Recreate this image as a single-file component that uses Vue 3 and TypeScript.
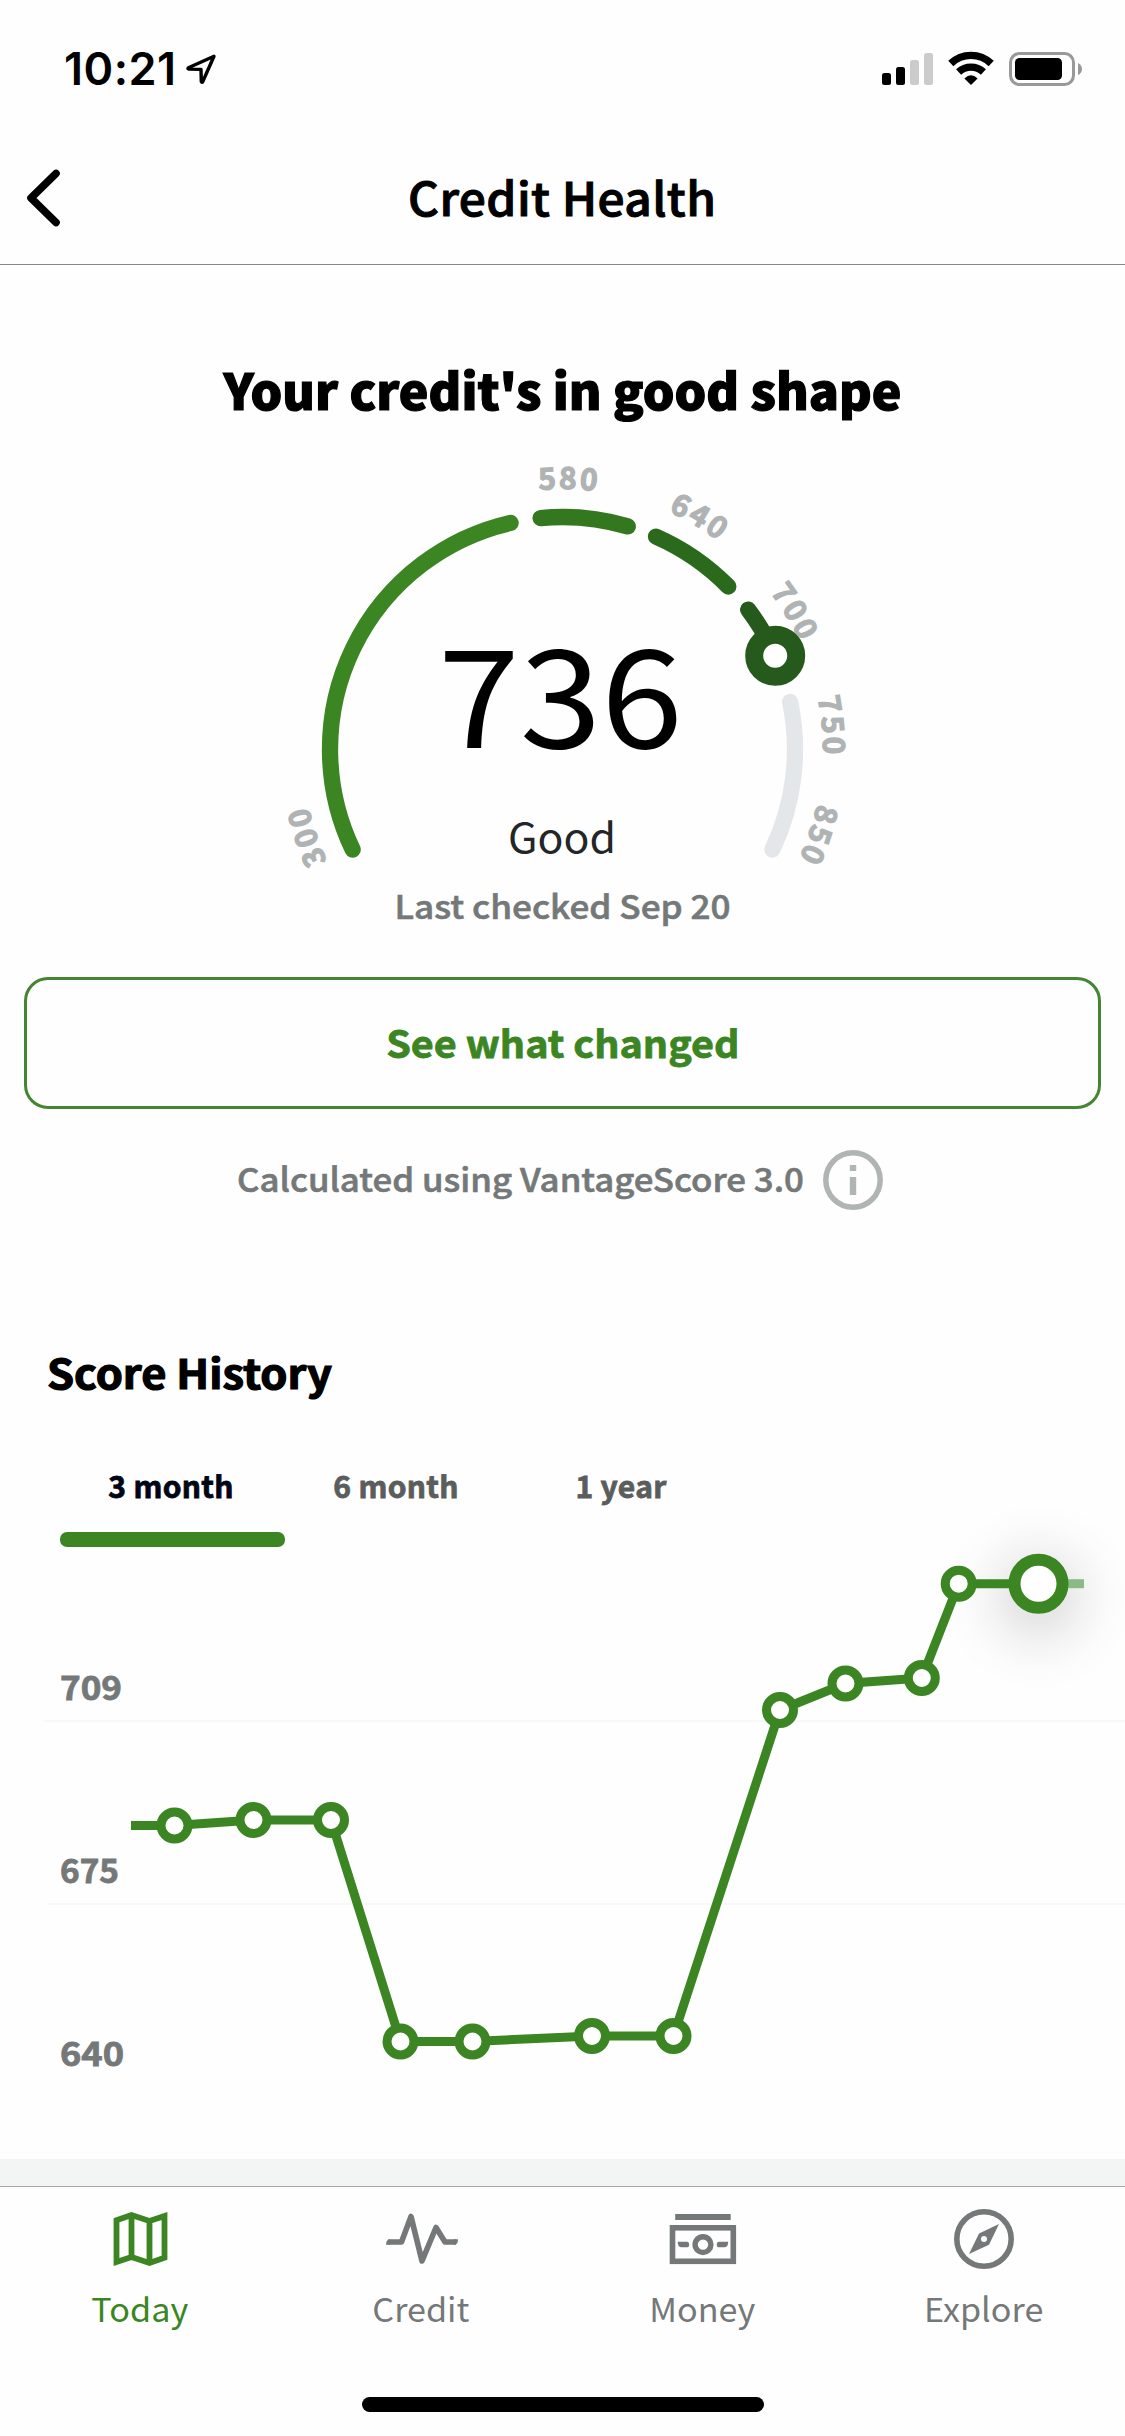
<script setup lang="ts">
interface Point { x: number; y: number }
interface Segment { from: number; to: number; color: string }
interface Label { text: string; angle: number }

const CX = 562.5
const CY = 749.5
const R = 232.5

function polar(angle: number, r: number): string {
  const a = (angle * Math.PI) / 180
  return `${(CX + r * Math.cos(a)).toFixed(2)} ${(CY + r * Math.sin(a)).toFixed(2)}`
}

function arc(from: number, to: number, r: number): string {
  return `M${polar(from, r)}A${r} ${r} 0 ${to - from > 180 ? 1 : 0} 1 ${polar(to, r)}`
}

const segments: Segment[] = [
  { from: -205.5, to: -102.9, color: '#3b8523' },
  { from: -95.4, to: -73.7, color: '#33781f' },
  { from: -66.3, to: -44.5, color: '#2b691d' },
  { from: -37, to: -23.8, color: '#255a1c' },
  { from: -11.8, to: 25.5, color: '#e4e7ea' },
]

const gaugeLabels: Label[] = [
  { text: '300', angle: -198.8 },
  { text: '580', angle: -88.6 },
  { text: '640', angle: -59.4 },
  { text: '700', angle: -30.6 },
  { text: '750', angle: -5 },
  { text: '850', angle: 18.6 },
]

const ranges = ['3 month', '6 month', '1 year']

const points: Point[] = [
  { x: 174.5, y: 1825.5 },
  { x: 253.5, y: 1820 },
  { x: 331, y: 1820 },
  { x: 400.5, y: 2041.5 },
  { x: 472.5, y: 2041.5 },
  { x: 592, y: 2036 },
  { x: 673.5, y: 2036 },
  { x: 780, y: 1710 },
  { x: 845.5, y: 1683.5 },
  { x: 921.8, y: 1678 },
  { x: 958.7, y: 1583.7 },
]
const latest: Point = { x: 1038.5, y: 1583.7 }
const line = [{ x: 131, y: 1825.5 }, ...points, latest].map((p) => `${p.x},${p.y}`).join(' ')

const axis = [
  { text: '709', y: 1700, width: 62 },
  { text: '675', y: 1883, width: 59 },
  { text: '640', y: 2066, width: 64 },
]
</script>

<template>
  <div class="screen">
    <div class="status">
      <div class="clock">
        <span>10:21</span>
        <svg width="32" height="32" viewBox="0 0 32 32">
          <path d="M29 3.2L3.400 14.800q-1.200.9.400 1.300l12.200.3.300 12.200q.6 1.300 1.400.1z" fill="none" stroke="#000" stroke-width="3.400" stroke-linejoin="round" />
        </svg>
      </div>
      <svg class="indicators" width="202" height="36" viewBox="881 51 202 36">
        <rect x="882" y="73" width="9" height="12" rx="2.500" />
        <rect x="896" y="67" width="9" height="18" rx="2.500" />
        <rect x="910" y="60" width="9" height="25" rx="2.500" fill="#cbcbcb" />
        <rect x="924" y="53" width="9" height="32" rx="2.500" fill="#cbcbcb" />
        <path d="M950.800 63.500A29.200 29.200 0 0 1 991.200 63.500" fill="none" stroke="#000" stroke-width="7.400" />
        <path d="M958.600 72A18.200 18.200 0 0 1 983.400 72" fill="none" stroke="#000" stroke-width="7.400" />
        <path d="M971 85L964.400 78.400Q971 72.200 977.600 78.400Z" />
        <rect x="1010.500" y="53.500" width="63" height="31" rx="9" fill="none" stroke="#999" stroke-width="3" />
        <rect x="1015" y="58" width="47" height="22" rx="4.500" />
        <path d="M1078 63q4 2 4 6t-4 6z" fill="#999" />
      </svg>
    </div>

    <header class="nav">
      <svg class="back" width="36" height="60" viewBox="0 0 36 60">
        <path d="M32 5.500L7 30L32 54.500" fill="none" stroke="#000" stroke-width="7.600" stroke-linecap="round" stroke-linejoin="round" />
      </svg>
      <h1>Credit Health</h1>
    </header>

    <main>
      <h2 class="headline">Your credit's in good shape</h2>

      <svg class="gauge" width="1125" height="462" viewBox="0 419 1125 462">
        <defs>
          <path v-for="l in gaugeLabels" :id="'arc' + l.text" :key="l.text" :d="arc(l.angle - 12, l.angle + 12, 260.500)" />
        </defs>
        <text v-for="l in gaugeLabels" :key="l.text" class="tick">
          <textPath :href="'#arc' + l.text" startOffset="50%">{{ l.text }}</textPath>
        </text>
        <path v-for="s in segments" :key="s.from" :d="arc(s.from, s.to, R)" :stroke="s.color" class="segment" />
        <circle cx="775.200" cy="655.700" r="21" fill="#fff" stroke="#255a1c" stroke-width="18" />
        <text class="score" x="438" y="748" textLength="245" lengthAdjust="spacingAndGlyphs">736</text>
        <text class="rating" x="508" y="852.500" textLength="108" lengthAdjust="spacingAndGlyphs">Good</text>
      </svg>

      <p class="checked">Last checked Sep 20</p>
      <button class="changed"><span>See what changed</span></button>

      <div class="model">
        <span>Calculated using VantageScore 3.0</span>
        <svg width="60" height="60" viewBox="0 0 60 60">
          <circle cx="30" cy="30" r="27.200" fill="none" stroke="#b1b4b4" stroke-width="5.500" />
          <path d="M26.800 15h6.400v6h-6.400zM26.800 27h6.400V45h-6.400z" fill="#b1b4b4" />
        </svg>
      </div>

      <h3 class="history">Score History</h3>
      <div class="ranges">
        <div v-for="(r, i) in ranges" :key="r" class="range" :class="{ active: i === 0 }"><span>{{ r }}</span></div>
      </div>

      <svg class="chart" width="1125" height="612" viewBox="0 1547 1125 612">
        <defs>
          <radialGradient id="glow">
            <stop offset="0.250" stop-color="#000" stop-opacity="0.090" />
            <stop offset="0.500" stop-color="#000" stop-opacity="0.042" />
            <stop offset="0.750" stop-color="#000" stop-opacity="0.012" />
            <stop offset="1" stop-color="#000" stop-opacity="0" />
          </radialGradient>
        </defs>
        <path d="M44 1721H1125M48 1904H1125" stroke="#f8f8f8" stroke-width="2" />
        <text v-for="a in axis" :key="a.text" class="axis" x="60" :y="a.y" :textLength="a.width" lengthAdjust="spacingAndGlyphs">{{ a.text }}</text>
        <circle cx="1038.500" cy="1597" r="96" fill="url(#glow)" />
        <path d="M1060 1583.700H1084" stroke="#8bba86" stroke-width="9" />
        <polyline :points="line" fill="none" stroke="#3b8523" stroke-width="9" />
        <circle v-for="p in points" :key="p.x" :cx="p.x" :cy="p.y" r="13.500" class="dot" />
        <circle :cx="latest.x" :cy="latest.y" r="24" class="dot latest" />
      </svg>
    </main>

    <div class="band"></div>

    <nav class="tabs">
      <div class="tab active">
        <svg width="80" height="60" viewBox="100.500 2209 80 60">
          <path d="M116 2220.300L131 2215L149 2221L164 2216V2257.700L149 2263L131 2257L116 2262ZM131 2215V2257M149 2221V2263" fill="none" stroke="currentColor" stroke-width="5.800" stroke-linejoin="miter" />
        </svg>
        <span>Today</span>
      </div>
      <div class="tab">
        <svg width="80" height="60" viewBox="382 2209 80 60">
          <path d="M388.500 2242H401.500L411 2216.500L422 2261L436 2227.500L445 2242H456" fill="none" stroke="currentColor" stroke-width="5.600" stroke-linejoin="round" />
          <path d="M386 2244.800Q386 2239.200 390 2239.200V2244.800ZM454 2239.200H458Q458 2244.800 454 2244.800Z" fill="currentColor" />
        </svg>
        <span>Credit</span>
      </div>
      <div class="tab">
        <svg width="80" height="60" viewBox="663.300 2209 80 60">
          <path d="M675.500 2217H731" stroke="currentColor" stroke-width="6" />
          <rect x="672.800" y="2227.800" width="60.800" height="33.500" fill="none" stroke="currentColor" stroke-width="5.600" />
          <circle cx="703.300" cy="2244.600" r="7.900" fill="none" stroke="currentColor" stroke-width="5.400" />
          <path d="M678 2241.800H687.500Q689.500 2241.800 689.500 2244.500T687.500 2247.300H682Q678 2247.300 678 2241.800ZM728.500 2241.800H719Q717 2241.800 717 2244.500T719 2247.300H724.500Q728.500 2247.300 728.500 2241.800Z" fill="currentColor" />
        </svg>
        <span>Money</span>
      </div>
      <div class="tab">
        <svg width="80" height="60" viewBox="944 2209 80 60">
          <circle cx="984" cy="2239" r="27.200" fill="none" stroke="currentColor" stroke-width="5.600" />
          <path d="M999 2224L979 2233.500L969 2254L989 2244.800ZM984 2236A3 3 0 1 1 984 2242A3 3 0 1 1 984 2236Z" fill="currentColor" fill-rule="evenodd" />
        </svg>
        <span>Explore</span>
      </div>
    </nav>
    <div class="home"></div>
  </div>
</template>

<style>
body {
  margin: 0;
  background: #fff;
}
</style>

<style scoped>
.screen {
  width: 1125px;
  height: 2436px;
  overflow: hidden;
  background: #fefefe;
  color: #000;
  font-family: "Noto Sans CJK SC", "Noto Sans CJK JP", "Noto Sans", sans-serif;
}
svg {
  display: block;
  flex: none;
  overflow: visible;
}
h1, h2, h3, p {
  margin: 0;
}
.status {
  height: 132px;
  box-sizing: border-box;
  padding: 51px 42px 0 64px;
  display: flex;
  justify-content: space-between;
  align-items: flex-start;
}
.clock {
  display: flex;
  align-items: center;
  gap: 8px;
  height: 36px;
  font: 600 45px/36px Inter, sans-serif;
  letter-spacing: 0.5px;
}
.nav {
  height: 133px;
  box-sizing: border-box;
  display: grid;
  grid-template-columns: 1fr auto 1fr;
  align-items: center;
  border-bottom: 1px solid #888;
}
.back {
  margin-left: 24px;
}
.nav h1 {
  font-size: 46px;
  font-weight: 500;
  line-height: 60px;
  padding-bottom: 4px;
  letter-spacing: 0.4px;
  transform: scaleX(1.04);
  -webkit-text-stroke: 1px #000;
}
.headline {
  margin-top: 94px;
  height: 60px;
  line-height: 60px;
  font-size: 49px;
  font-weight: 900;
  text-align: center;
  transform: scaleX(1.018);
  -webkit-text-stroke: 1.2px #000;
}
.segment {
  fill: none;
  stroke-width: 16.3px;
  stroke-linecap: round;
}
.tick {
  font-size: 30px;
  font-weight: 700;
  letter-spacing: 2.4px;
  text-anchor: middle;
  fill: #b0b3b4;
  stroke: #b0b3b4;
  stroke-width: 1.2px;
}
.score {
  font-size: 136px;
  font-weight: 400;
}
.rating {
  font-size: 41px;
  fill: #222627;
}
.checked {
  height: 48px;
  line-height: 48px;
  font-size: 33px;
  font-weight: 500;
  color: #747878;
  text-align: center;
  transform: scaleX(1.064);
  -webkit-text-stroke: 0.6px #747878;
}
.changed {
  display: block;
  width: 1077px;
  height: 132px;
  margin: 48px 24px 0;
  padding: 0 0 4px;
  border: 3px solid #438530;
  border-radius: 24px;
  background: #fefefe;
  font-family: inherit;
  font-size: 38px;
  font-weight: 700;
  color: #3b8523;
}
.changed span {
  display: inline-block;
  transform: scaleX(1.04);
  -webkit-text-stroke: 0.8px #3b8523;
}
.model {
  display: flex;
  justify-content: center;
  align-items: center;
  gap: 20px;
  height: 60px;
  margin-top: 41px;
  padding-right: 5px;
}
.model span {
  margin-right: 29px;
  font-size: 33px;
  font-weight: 500;
  line-height: 48px;
  padding-bottom: 5px;
  color: #747878;
  transform: scaleX(1.055);
  transform-origin: left;
  -webkit-text-stroke: 0.6px #747878;
}
.history {
  margin: 132px 0 0 47px;
  height: 60px;
  line-height: 60px;
  font-size: 40.5px;
  font-weight: 700;
  transform: scaleX(1.072);
  transform-origin: left;
  -webkit-text-stroke: 1.2px #000;
}
.ranges {
  display: flex;
  margin: 63px 0 0 60px;
}
.range {
  width: 225px;
  height: 82px;
  box-sizing: border-box;
  text-align: center;
  font-size: 30px;
  font-weight: 700;
  line-height: 40px;
  letter-spacing: 0.3px;
  color: #5b5d5d;
  -webkit-text-stroke: 0.8px currentColor;
}
.range span {
  margin-right: 3px;
}
.range.active {
  color: #000514;
}
.range.active::after {
  content: "";
  display: block;
  height: 15px;
  margin-top: 27px;
  border-radius: 7px;
  background: #3b8523;
}
.axis {
  font-size: 32.5px;
  font-weight: 700;
  fill: #747878;
  stroke: #747878;
  stroke-width: 0.8px;
}
.dot {
  fill: #fff;
  stroke: #3b8523;
  stroke-width: 9px;
}
.dot.latest {
  stroke-width: 12px;
}
.band {
  height: 27px;
  background: #f3f5f4;
}
.tabs {
  display: grid;
  grid-template-columns: repeat(4, 1fr);
  border-top: 1px solid #a8a8a8;
}
.tab {
  display: flex;
  flex-direction: column;
  align-items: center;
  gap: 17px;
  padding-top: 22px;
  color: #747878;
}
.tab span {
  margin-right: 2px;
  font-size: 33px;
  line-height: 44px;
  transform: scaleX(1.035);
}
.tab.active {
  color: #3b8523;
}
.home {
  width: 402px;
  height: 15px;
  margin: 67px auto 0;
  border-radius: 8px;
  background: #000;
}
</style>
